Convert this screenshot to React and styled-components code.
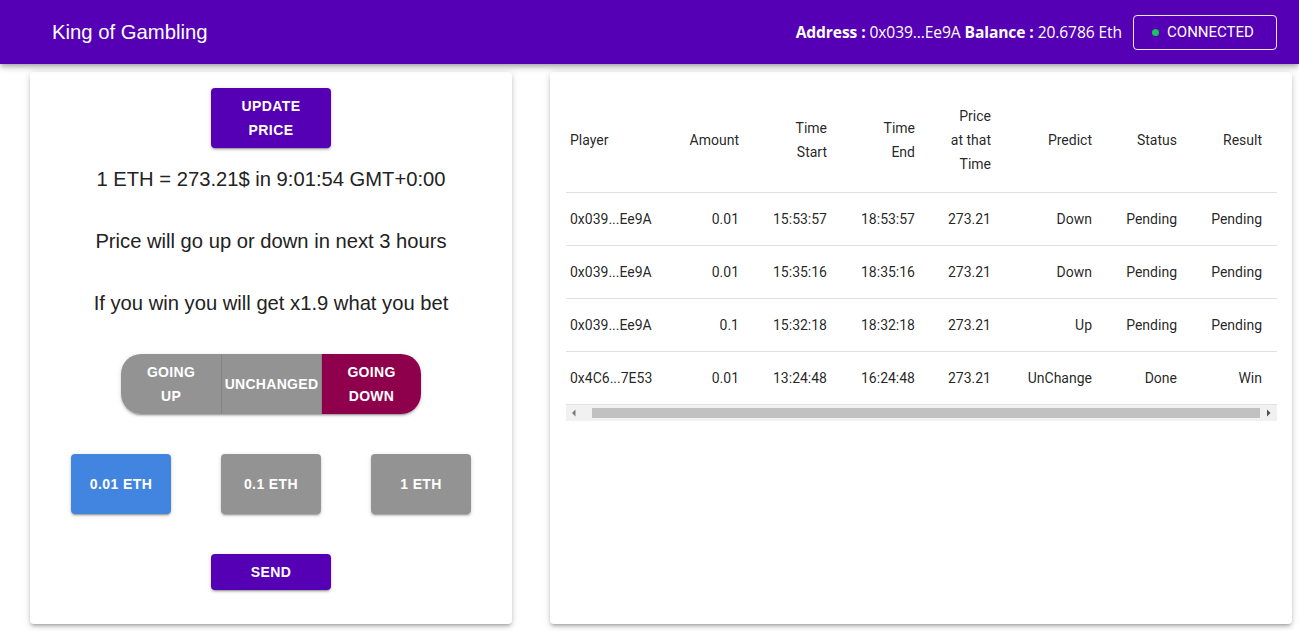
import React from "react";
import styled, { createGlobalStyle } from "styled-components";

const Global = createGlobalStyle`
  html, body { margin: 0; padding: 0; background: #fff; }
  body { font-family: Roboto, "Liberation Sans", Arial, sans-serif; color: rgba(0,0,0,0.87); }
  * { box-sizing: border-box; }
`;

const Bar = styled.header`
  height: 64px;
  background: #5500b5;
  display: flex;
  align-items: center;
  justify-content: space-between;
  padding: 0 22px 0 52px;
  box-shadow: 0 2px 4px -1px rgba(0,0,0,0.2), 0 4px 5px 0 rgba(0,0,0,0.14), 0 1px 10px 0 rgba(0,0,0,0.12);
  position: relative;
  z-index: 2;
`;

const Title = styled.h1`
  margin: 0;
  font-family: "Liberation Sans", Arial, sans-serif;
  font-weight: 400;
  font-size: 20.3px;
  color: #fff;
`;

const Account = styled.div`
  display: flex;
  align-items: center;
  gap: 11px;
`;

const Info = styled.span`
  font-family: "Open Sans", "Noto Sans", sans-serif;
  font-size: 15.6px;
  color: #fff;
  letter-spacing: -0.1px;
  b { font-weight: 700; }
`;

const Connected = styled.div`
  height: 35px;
  width: 144px;
  border: 1px solid rgba(255,255,255,0.9);
  border-radius: 4px;
  display: flex;
  align-items: center;
  justify-content: center;
  gap: 8px;
  color: #fff;
  font-family: Roboto, "Liberation Sans", Arial, sans-serif;
  font-size: 15px;
  padding-right: 4px;
`;

const Dot = styled.span`
  width: 7px;
  height: 7px;
  border-radius: 50%;
  background: #17c45a;
`;

const Main = styled.main`
  display: grid;
  grid-template-columns: 482px 742px;
  column-gap: 38px;
  padding: 8px 0 14px 30px;
`;

const Card = styled.section`
  background: #fff;
  border-radius: 4px;
  box-shadow: 0 3px 3px -2px rgba(0,0,0,0.22), 0 3px 4px 0 rgba(0,0,0,0.14), 0 1px 8px 0 rgba(0,0,0,0.12);
  padding: 16px;
  min-width: 0;
`;

const BetCard = styled(Card)`
  display: flex;
  flex-direction: column;
  align-items: center;
  padding-bottom: 34px;
`;

const Button = styled.button`
  border: none;
  border-radius: 4px;
  width: ${p => p.$w || 120}px;
  height: ${p => p.$h || 36}px;
  background: ${p => p.$bg || "#5500b5"};
  color: #fff;
  font-family: "Liberation Sans", Arial, sans-serif;
  font-weight: 700;
  font-size: 14px;
  line-height: 24px;
  letter-spacing: 0.4px;
  text-transform: uppercase;
  margin-top: ${p => p.$mt || 0}px;
  box-shadow: 0 3px 1px -2px rgba(0,0,0,0.2), 0 2px 2px 0 rgba(0,0,0,0.14), 0 1px 5px 0 rgba(0,0,0,0.12);
  padding: 0 14px;
  cursor: pointer;
`;

const Line = styled.p`
  margin: ${p => p.$mt}px 0 0;
  font-family: "Liberation Sans", Arial, sans-serif;
  font-size: 20.2px;
  line-height: 24px;
  color: #222;
  text-align: center;
`;

const Toggle = styled.div`
  display: flex;
  margin-top: 39px;
  border-radius: 20px;
  overflow: hidden;
  box-shadow: 0 3px 1px -2px rgba(0,0,0,0.2), 0 2px 2px 0 rgba(0,0,0,0.14), 0 1px 5px 0 rgba(0,0,0,0.12);
`;

const ToggleItem = styled.button`
  width: 100px;
  height: 60px;
  border: none;
  border-left: ${p => (p.$first ? "none" : "1px solid #858585")};
  background: ${p => (p.$active ? "#8e004b" : "#939393")};
  color: #fff;
  font-family: "Liberation Sans", Arial, sans-serif;
  font-weight: 700;
  font-size: 14px;
  line-height: 24px;
  letter-spacing: 0.3px;
  padding: 0;
`;

const AmountRow = styled.div`
  margin-top: 40px;
  width: 100%;
  display: grid;
  grid-template-columns: repeat(3, 1fr);
  justify-items: center;
`;

const TableWrap = styled.div`
  width: 711px;
  overflow: hidden;
`;

const Table = styled.table`
  border-collapse: collapse;
  table-layout: fixed;
  width: 728px;
  font-family: Roboto, "Liberation Sans", Arial, sans-serif;
  font-size: 14px;
  color: rgba(0,0,0,0.87);
`;

const Th = styled.th`
  font-weight: 400;
  text-align: ${p => p.$align || "right"};
  padding: 16px ${p => p.$pr || 4}px 16px 4px;
  line-height: 24px;
  border-bottom: 1px solid #e0e0e0;
  vertical-align: middle;
`;

const Td = styled.td`
  text-align: ${p => p.$align || "right"};
  padding: 0 ${p => p.$pr || 4}px 0 4px;
  height: 53px;
  line-height: 20px;
  border-bottom: 1px solid #e0e0e0;
  white-space: nowrap;
`;

const Scrollbar = styled.div`
  width: 711px;
  height: 16px;
  background: #f1f1f1;
  display: grid;
  grid-template-columns: 16px 1fr 16px;
  align-items: center;
`;

const Arrow = styled.svg`
  width: 16px;
  height: 16px;
  display: block;
`;

const Track = styled.div`
  height: 10px;
  padding: 0 1px 0 10px;
  display: flex;
`;

const Thumb = styled.div`
  flex: 1;
  background: #c1c1c1;
`;

const cols = [114, 63, 88, 88, 76, 101, 85, 113];

const rows = [
  ["0x039...Ee9A", "0.01", "15:53:57", "18:53:57", "273.21", "Down", "Pending", "Pending"],
  ["0x039...Ee9A", "0.01", "15:35:16", "18:35:16", "273.21", "Down", "Pending", "Pending"],
  ["0x039...Ee9A", "0.1", "15:32:18", "18:32:18", "273.21", "Up", "Pending", "Pending"],
  ["0x4C6...7E53", "0.01", "13:24:48", "16:24:48", "273.21", "UnChange", "Done", "Win"],
];

export default function App() {
  return (
    <>
      <Global />
      <Bar>
        <Title>King of Gambling</Title>
        <Account>
          <Info><b>Address :</b> 0x039...Ee9A <b>Balance :</b> 20.6786 Eth</Info>
          <Connected><Dot />CONNECTED</Connected>
        </Account>
      </Bar>
      <Main>
        <BetCard>
          <Button $h={60}>Update<br />Price</Button>
          <Line $mt={19}>1 ETH = 273.21$ in 9:01:54 GMT+0:00</Line>
          <Line $mt={38}>Price will go up or down in next 3 hours</Line>
          <Line $mt={38}>If you win you will get x1.9 what you bet</Line>
          <Toggle>
            <ToggleItem $first>GOING<br />UP</ToggleItem>
            <ToggleItem>UNCHANGED</ToggleItem>
            <ToggleItem $active>GOING<br />DOWN</ToggleItem>
          </Toggle>
          <AmountRow>
            <Button $w={100} $h={60} $bg="#4285e0">0.01 ETH</Button>
            <Button $w={100} $h={60} $bg="#939393">0.1 ETH</Button>
            <Button $w={100} $h={60} $bg="#939393">1 ETH</Button>
          </AmountRow>
          <Button $mt={40}>Send</Button>
        </BetCard>
        <Card>
          <TableWrap>
            <Table>
              <colgroup>
                {cols.map((w, i) => <col key={i} style={{ width: w }} />)}
              </colgroup>
              <thead>
                <tr>
                  <Th $align="left">Player</Th>
                  <Th>Amount</Th>
                  <Th>Time<br />Start</Th>
                  <Th>Time<br />End</Th>
                  <Th>Price<br />at that<br />Time</Th>
                  <Th>Predict</Th>
                  <Th>Status</Th>
                  <Th $pr={32}>Result</Th>
                </tr>
              </thead>
              <tbody>
                {rows.map((r, i) => (
                  <tr key={i}>
                    {r.map((c, j) => (
                      <Td key={j} $align={j === 0 ? "left" : "right"} $pr={j === 7 ? 32 : 4}>{c}</Td>
                    ))}
                  </tr>
                ))}
              </tbody>
            </Table>
          </TableWrap>
          <Scrollbar>
            <Arrow viewBox="0 0 16 16"><path d="M9.5 4.5 L6 8 L9.5 11.5 Z" fill="#7a7a7a" /></Arrow>
            <Track><Thumb /></Track>
            <Arrow viewBox="0 0 16 16"><path d="M6 4.5 L9.5 8 L6 11.5 Z" fill="#505050" /></Arrow>
          </Scrollbar>
        </Card>
      </Main>
    </>
  );
}
